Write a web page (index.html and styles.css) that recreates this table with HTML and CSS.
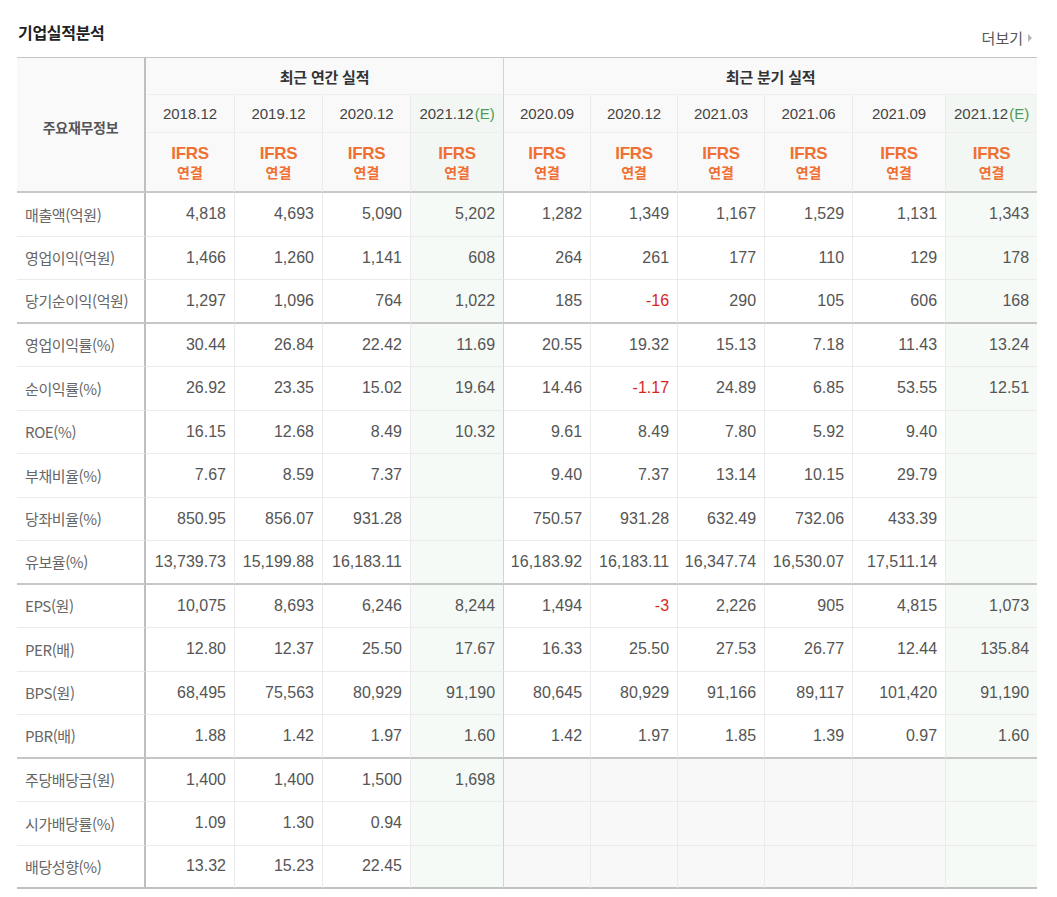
FILE: index.html
```html
<!DOCTYPE html>
<html lang="ko">
<head>
<meta charset="utf-8">
<title>기업실적분석</title>
<link rel="stylesheet" href="styles.css">
</head>
<body>
<div class="wrap">
  <div class="head">
    <h2 class="title">기업실적분석</h2>
    <a class="more" href="#">더보기<span class="arr"></span></a>
  </div>
  <table class="perf">
    <colgroup>
      <col style="width:129px"><col style="width:89px"><col style="width:88px"><col style="width:88px"><col style="width:93px">
      <col style="width:87px"><col style="width:87px"><col style="width:87px"><col style="width:88px"><col style="width:93px"><col style="width:91px">
    </colgroup>
    <thead>
      <tr class="h1">
        <th class="lab" rowspan="3">주요재무정보</th>
        <th class="grp gend" colspan="4">최근 연간 실적</th>
        <th class="grp last" colspan="6">최근 분기 실적</th>
      </tr>
      <tr class="h2">
        <th>2018.12</th><th>2019.12</th><th>2020.12</th><th class="est gend">2021.12<span class="e">(E)</span></th>
        <th>2020.09</th><th>2020.12</th><th>2021.03</th><th>2021.06</th><th>2021.09</th><th class="est last">2021.12<span class="e">(E)</span></th>
      </tr>
      <tr class="h3">
        <th><span class="ifrs">IFRS</span><span class="yg">연결</span></th>
        <th><span class="ifrs">IFRS</span><span class="yg">연결</span></th>
        <th><span class="ifrs">IFRS</span><span class="yg">연결</span></th>
        <th class="est gend"><span class="ifrs">IFRS</span><span class="yg">연결</span></th>
        <th><span class="ifrs">IFRS</span><span class="yg">연결</span></th>
        <th><span class="ifrs">IFRS</span><span class="yg">연결</span></th>
        <th><span class="ifrs">IFRS</span><span class="yg">연결</span></th>
        <th><span class="ifrs">IFRS</span><span class="yg">연결</span></th>
        <th><span class="ifrs">IFRS</span><span class="yg">연결</span></th>
        <th class="est last"><span class="ifrs">IFRS</span><span class="yg">연결</span></th>
      </tr>
    </thead>
    <tbody>
      <tr><th class="lab">매출액(억원)</th><td>4,818</td><td>4,693</td><td>5,090</td><td class="est gend">5,202</td><td>1,282</td><td>1,349</td><td>1,167</td><td>1,529</td><td>1,131</td><td class="est last">1,343</td></tr>
      <tr><th class="lab">영업이익(억원)</th><td>1,466</td><td>1,260</td><td>1,141</td><td class="est gend">608</td><td>264</td><td>261</td><td>177</td><td>110</td><td>129</td><td class="est last">178</td></tr>
      <tr class="sep"><th class="lab">당기순이익(억원)</th><td>1,297</td><td>1,096</td><td>764</td><td class="est gend">1,022</td><td>185</td><td class="neg">-16</td><td>290</td><td>105</td><td>606</td><td class="est last">168</td></tr>
      <tr><th class="lab">영업이익률(%)</th><td>30.44</td><td>26.84</td><td>22.42</td><td class="est gend">11.69</td><td>20.55</td><td>19.32</td><td>15.13</td><td>7.18</td><td>11.43</td><td class="est last">13.24</td></tr>
      <tr><th class="lab">순이익률(%)</th><td>26.92</td><td>23.35</td><td>15.02</td><td class="est gend">19.64</td><td>14.46</td><td class="neg">-1.17</td><td>24.89</td><td>6.85</td><td>53.55</td><td class="est last">12.51</td></tr>
      <tr><th class="lab">ROE(%)</th><td>16.15</td><td>12.68</td><td>8.49</td><td class="est gend">10.32</td><td>9.61</td><td>8.49</td><td>7.80</td><td>5.92</td><td>9.40</td><td class="est last"></td></tr>
      <tr><th class="lab">부채비율(%)</th><td>7.67</td><td>8.59</td><td>7.37</td><td class="est gend"></td><td>9.40</td><td>7.37</td><td>13.14</td><td>10.15</td><td>29.79</td><td class="est last"></td></tr>
      <tr><th class="lab">당좌비율(%)</th><td>850.95</td><td>856.07</td><td>931.28</td><td class="est gend"></td><td>750.57</td><td>931.28</td><td>632.49</td><td>732.06</td><td>433.39</td><td class="est last"></td></tr>
      <tr class="sep"><th class="lab">유보율(%)</th><td>13,739.73</td><td>15,199.88</td><td>16,183.11</td><td class="est gend"></td><td>16,183.92</td><td>16,183.11</td><td>16,347.74</td><td>16,530.07</td><td>17,511.14</td><td class="est last"></td></tr>
      <tr><th class="lab">EPS(원)</th><td>10,075</td><td>8,693</td><td>6,246</td><td class="est gend">8,244</td><td>1,494</td><td class="neg">-3</td><td>2,226</td><td>905</td><td>4,815</td><td class="est last">1,073</td></tr>
      <tr><th class="lab">PER(배)</th><td>12.80</td><td>12.37</td><td>25.50</td><td class="est gend">17.67</td><td>16.33</td><td>25.50</td><td>27.53</td><td>26.77</td><td>12.44</td><td class="est last">135.84</td></tr>
      <tr><th class="lab">BPS(원)</th><td>68,495</td><td>75,563</td><td>80,929</td><td class="est gend">91,190</td><td>80,645</td><td>80,929</td><td>91,166</td><td>89,117</td><td>101,420</td><td class="est last">91,190</td></tr>
      <tr class="sep"><th class="lab">PBR(배)</th><td>1.88</td><td>1.42</td><td>1.97</td><td class="est gend">1.60</td><td>1.42</td><td>1.97</td><td>1.85</td><td>1.39</td><td>0.97</td><td class="est last">1.60</td></tr>
      <tr><th class="lab">주당배당금(원)</th><td>1,400</td><td>1,400</td><td>1,500</td><td class="est gend">1,698</td><td class="na"></td><td class="na"></td><td class="na"></td><td class="na"></td><td class="na"></td><td class="est last"></td></tr>
      <tr><th class="lab">시가배당률(%)</th><td>1.09</td><td>1.30</td><td>0.94</td><td class="est gend"></td><td class="na"></td><td class="na"></td><td class="na"></td><td class="na"></td><td class="na"></td><td class="est last"></td></tr>
      <tr class="end"><th class="lab">배당성향(%)</th><td>13.32</td><td>15.23</td><td>22.45</td><td class="est gend"></td><td class="na"></td><td class="na"></td><td class="na"></td><td class="na"></td><td class="na"></td><td class="est last"></td></tr>
    </tbody>
  </table>
</div>
</body>
</html>
```
FILE: styles.css
```css
html, body {
  margin: 0;
  padding: 0;
  background: #ffffff;
}
body {
  font-family: "Liberation Sans", "Noto Sans CJK KR", sans-serif;
  color: #555555;
}
.wrap {
  width: 1020px;
  padding-left: 17px;
}
.head {
  height: 57px;
  display: flex;
  justify-content: space-between;
  align-items: flex-start;
}
.title {
  margin: 0;
  padding-top: 22px;
  padding-left: 1px;
  font-family: "Noto Sans CJK KR", sans-serif;
  font-size: 16px;
  line-height: 20px;
  font-weight: 700;
  color: #222222;
  letter-spacing: -0.3px;
}
.more {
  margin-top: 29px;
  margin-right: 5px;
  font-family: "Noto Sans CJK KR", sans-serif;
  font-size: 15px;
  line-height: 18px;
  color: #555555;
  text-decoration: none;
  display: flex;
  align-items: center;
}
.arr {
  display: inline-block;
  width: 0;
  height: 0;
  margin-left: 5px;
  border-top: 4px solid transparent;
  border-bottom: 4px solid transparent;
  border-left: 4px solid #b5b5b5;
}
.perf {
  width: 1020px;
  table-layout: fixed;
  border-collapse: separate;
  border-spacing: 0;
}
.perf th, .perf td {
  box-sizing: border-box;
  padding: 0;
  border-right: 1px solid #ebebeb;
  border-bottom: 1px solid #ebebeb;
  vertical-align: middle;
}
.perf thead th {
  background: #f9f9f9;
  font-weight: normal;
  text-align: center;
}
.perf .h1 th {
  height: 38px;
  border-top: 1px solid #c6c6c6;
  border-bottom-color: #efefef;
}
.perf .grp {
  font-family: "Noto Sans CJK KR", sans-serif;
  font-size: 15px;
  font-weight: 700;
  color: #333333;
  letter-spacing: -0.2px;
}
.perf .h2 th {
  height: 38px;
  font-size: 15px;
  color: #444444;
  border-bottom-color: #efefef;
}
.perf .h2 .e {
  color: #4f9a55;
  margin-left: 1px;
}
.perf .h3 th {
  height: 60px;
  border-bottom: 2px solid #c8c8c8;
}
.ifrs, .yg {
  display: block;
  color: #f07033;
  font-weight: 700;
}
.ifrs {
  font-size: 17px;
  line-height: 19px;
  letter-spacing: -0.3px;
}
.yg {
  font-family: "Noto Sans CJK KR", sans-serif;
  font-size: 14px;
  line-height: 18px;
}
.perf thead th.lab {
  border-top: 1px solid #c6c6c6;
  border-right: 2px solid #bfbfbf;
  border-bottom: 2px solid #c8c8c8;
  font-family: "Noto Sans CJK KR", sans-serif;
  font-size: 14px;
  font-weight: 700;
  color: #555555;
  letter-spacing: -0.3px;
  padding-top: 4px;
}
.perf tbody th.lab {
  background: #ffffff;
  border-right: 2px solid #bfbfbf;
  text-align: left;
  padding-left: 8px;
  font-family: "Noto Sans CJK KR", sans-serif;
  font-size: 15px;
  font-weight: normal;
  color: #666666;
  letter-spacing: -0.4px;
  white-space: nowrap;
}
.perf tbody th, .perf tbody td {
  height: 43.5px;
}
.perf tbody td {
  text-align: right;
  padding-right: 8px;
  font-size: 16px;
  color: #555555;
  white-space: nowrap;
}
.perf thead th.est {
  background: #f2f7f4;
}
.perf tbody td.est {
  background: #f5faf7;
}
.perf tbody td.na {
  background: #f8f8f8;
}
.perf .gend {
  border-right-color: #d2d2d2;
}
.perf .last {
  border-right: none;
}
.perf td.neg {
  color: #d8261e;
}
.perf tbody tr.sep th, .perf tbody tr.sep td {
  border-bottom: 2px solid #c6c6c6;
}
.perf tbody tr.end th, .perf tbody tr.end td {
  border-bottom: 2px solid #c0c0c0;
}
```
